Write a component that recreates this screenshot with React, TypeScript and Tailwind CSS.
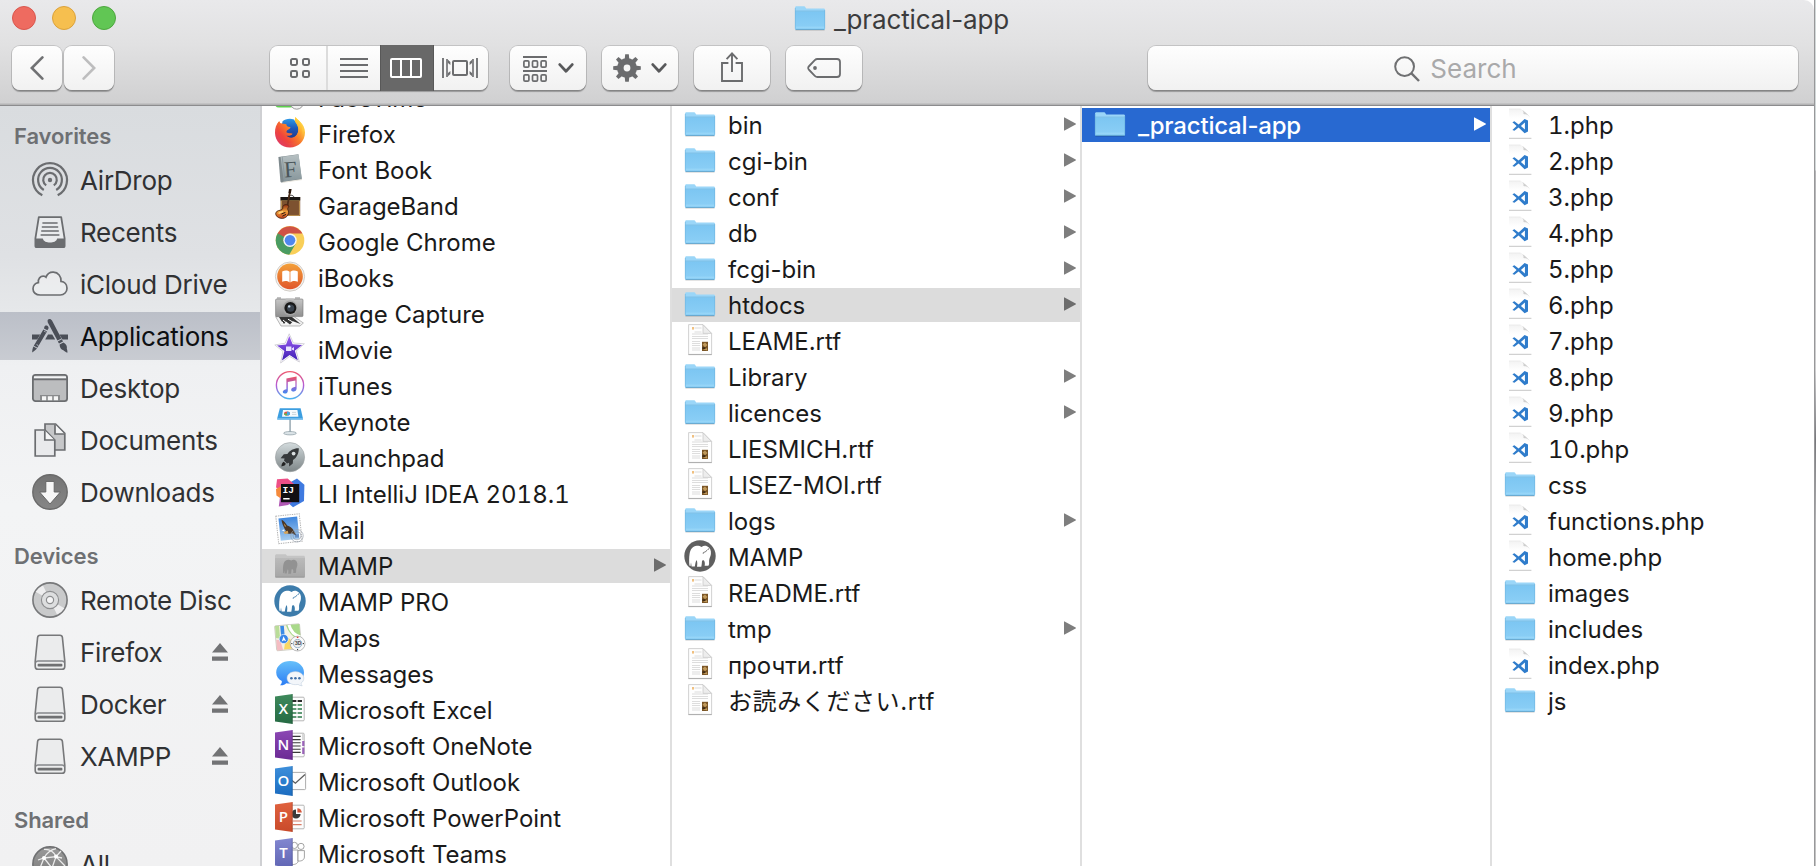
import type { ReactNode } from "react";

/* ---------- file icons, drawn on a 32px grid ---------- */

function Icon({ children }: { children: ReactNode }) {
  return (
    <svg className="h-8 w-8 shrink-0 self-start overflow-visible" viewBox="0 0 32 32" fill="none">
      {children}
    </svg>
  );
}

function FolderShape() {
  return (
    <g>
      <path d="M1.4 27.6H30.6V28.6H1.4z" fill="#000" opacity=".18" />
      <path d="M1 6C1 4.9 1.6 4.3 2.6 4.3H9.6C10.6 4.3 11 4.6 11.5 5.4L12.2 6.6H29.5C30.5 6.6 31 7.2 31 8V26H1z" fill="#9bd6f8" />
      <path d="M1 9.2H31V26.4C31 27.2 30.6 27.8 29.8 27.8H2.2C1.4 27.8 1 27.2 1 26.4z" fill="url(#folderBody)" />
      <path d="M1 9H31" stroke="#79bbe2" strokeWidth=".8" />
      <path d="M1.6 27.5H30.4" stroke="#5d9fc8" strokeWidth=".8" />
      <path d="M1.3 25.2H30.7" stroke="#a5dcf9" strokeWidth=".7" />
      <path d="M1.3 6V26.6M30.7 8V26.6" stroke="#6db3dd" strokeWidth=".6" />
    </g>
  );
}

const Folder = () => (
  <Icon>
    <FolderShape />
  </Icon>
);

const RTF_LINES = [4, 8, 10, 12.5, 14.5, 17.5, 19.5, 21.5, 24, 26];

const Rtf = () => (
  <Icon>
    <path d="M4.6 .6H19L27.6 9.4V30.4H4.6z" fill="#fefefe" stroke="#cdcdcd" strokeWidth=".9" />
    <path d="M4.4 30.6H27.8" stroke="#a6a6a6" strokeWidth=".9" />
    <path d="M19 .8V9.4H27.5z" fill="#ededed" stroke="#c4c4c4" strokeWidth=".7" />
    {RTF_LINES.map((y) => (
      <path key={y} d={y > 16.5 ? `M8 ${y}H16` : y > 9 ? `M8 ${y}H24` : `M10.5 ${y}H17.5`} stroke="#d4d4d4" strokeWidth=".8" />
    ))}
    <rect x="8" y="3" width="2" height="2.6" fill="#f0c080" />
    <rect x="18" y="17.8" width="6" height="9.2" fill="#7a5526" />
    <path d="M18.5 20.5L21 18.5L23.5 21L21 23.2zM19 25.5L22.5 24L23.6 26.5z" fill="#c09a5c" />
    <path d="M18.4 23.2H21.4V25H18.4z" fill="#3f2b14" />
  </Icon>
);

const Php = () => (
  <Icon>
    <path d="M5 1H16.6C19 2 19.6 3.6 19.6 5.6C22.2 5.8 24.4 6.6 26 8.8V30H5z" fill="url(#pageFade)" />
    <path d="M16.6 1C19.4 2.4 23.6 6 26 8.8C24 7 22 6.2 19.4 6C19.8 4 19 2.2 16.6 1z" fill="#cfcfcf" />
    <path d="M5 1H16.6" stroke="#e3e3e3" strokeWidth=".6" />
    <path d="M5 30.3H27.4" stroke="#c6c6c6" strokeWidth="1" />
    <path
      fillRule="evenodd"
      clipRule="evenodd"
      d="M20.6 11L24 12.6V23.6L20.6 25.2L14.6 19.6L10.4 22.8L8.4 21.9L12.6 18L8.4 14.2L10.4 13.3L14.6 16.5zM20.9 14.6L16.9 18L20.9 21.6z"
      fill="#2f7ccb"
    />
  </Icon>
);

const ElephantShape = ({ fill }: { fill: string }) => (
  <path
    d="M5.4 25.6C5 21.5 5 17.3 5.6 13.8C6.2 9.2 8.8 6 12.8 5.7C14.8 5.6 16.2 6.2 17.6 6.9C19.2 5.6 21.3 5.4 23 6.2C26 7.5 27.4 10.6 26.9 14C26.6 16.4 25.4 18.2 25.1 20.5C24.9 22.3 25.6 24 24.4 25.8H20.6C21.2 23.2 20.7 21.6 20 20.4C19.2 20 18.6 20.4 18.1 20.6C17.8 22.5 17.9 24.4 17.3 26.8H13C13.4 24.6 13.4 22.6 12.9 20.6H12.2C11.4 22.4 11.4 24.4 10.8 26.5H7.6C7.4 25 7.2 23.6 7 22.4C6.8 23.4 6.6 24.6 6.6 26z"
    fill={fill}
  />
);

function Mamp({ ring }: { ring: string }) {
  return (
    <Icon>
      <circle cx="16" cy="16" r="15.7" fill={ring} />
      <ElephantShape fill="#fff" />
      <path d="M25.2 8.6C23.4 9.2 22.6 11.6 20.4 12.2C19.2 12.4 18.8 12.8 19.4 13.8" stroke={ring} strokeWidth=".9" />
    </Icon>
  );
}
const MampGray = () => <Mamp ring="#5f5f5f" />;
const MampPro = () => <Mamp ring="#3d7cab" />;

const MampFolder = () => (
  <Icon>
    <path d="M1 7C1 5.8 1.8 5.2 2.8 5.2H11C12 5.2 12.6 5.8 13 6.8H29.4C30.4 6.8 31 7.4 31 8.4V27.6H1z" fill="#c4c4c4" />
    <path d="M1 9H31V27C31 27.8 30.6 28.2 29.8 28.2H2.2C1.4 28.2 1 27.8 1 27z" fill="url(#grayFolder)" />
    <path d="M1.3 28.2H30.7" stroke="#8f8f8f" strokeWidth=".8" />
    <g transform="translate(5.6 7) scale(.66)">
      <ElephantShape fill="#929292" />
    </g>
  </Icon>
);

const FaceTime = () => (
  <Icon>
    <rect x="1" y="8" width="19" height="18.6" rx="4" fill="#5ecf4e" />
    <circle cx="22.8" cy="21.6" r="6.6" fill="#f2f2f2" stroke="#8f8f8f" strokeWidth=".9" />
  </Icon>
);

const Firefox = () => (
  <Icon>
    <path d="M1 16C.8 11 2.4 6.6 5.2 4.2C5.6 5.4 6 6 6.8 6.6C8.6 6 10.4 6 12 6.6L21.6 4.2C21 3 20.8 1.6 21.6 0C22.4 1.8 24.2 3 25.8 4.4C29.2 7.2 31 11 31 15.6C31 24 24.4 30.6 16 30.6C7.6 30.6 1.2 24.4 1 16z" fill="url(#fx)" />
    <path d="M8.4 4.4C11 1.8 16 .8 20 2.4C22 6 24.6 8 24.4 12.6C24.2 18 20.4 21.4 15.6 21.4C11 21.4 8 18.4 7.6 14.6z" fill="url(#fxGlobe)" />
    <path d="M5.2 4.2C5.6 5.4 6.2 6.4 7.4 7C9 6.4 11.4 6.6 12.6 7.4C12.2 9.4 14.4 9.6 16.4 10C16.6 11.4 15 12.4 13.2 13.2C12.6 13.6 12.4 14.6 12.6 15.6C14.4 16.8 16.4 15.8 18.6 16.8C17.4 18.6 14.6 19.2 12.4 18.6C15.4 22.4 22.4 21 24 15.4C24.8 12.4 24.2 9 21.6 5.6C20.6 4.2 20.6 1.8 21.6 0C22.4 1.8 24.2 3 25.8 4.4C27.6 6.4 28.6 11 28 15.6C26.8 23 21 26.6 14.8 26C7.6 25.2 2.6 19.6 3 11C3 8 3.8 5.6 5.2 4.2z" fill="url(#fxTail)" />
  </Icon>
);

const FontBook = () => (
  <Icon>
    <path d="M4.4 4L24.4 1.2L27.8 26.4L8 29.6C7 29.6 6.6 29 6.4 28.2z" fill="#7e898d" />
    <path d="M6.6 4L24.6 1.4L27.8 25.6L9.8 28.6z" fill="url(#book)" />
    <path d="M8.2 3.8L11 28.4" stroke="#86949a" strokeWidth=".8" />
    <path d="M8.6 29.4L27.8 26.6" stroke="#ece9e0" strokeWidth="1" />
    <text x="10" y="24" fontSize="23" fontFamily="Liberation Serif, serif" fill="#4b565a" transform="rotate(-4 16 16)">F</text>
  </Icon>
);

const GarageBand = () => (
  <Icon>
    <rect x="6.6" y="8" width="19.6" height="19" fill="#6e4424" />
    <rect x="7.4" y="11.4" width="18" height="15" fill="#7d5230" stroke="#c49a55" strokeWidth=".9" />
    <rect x="6.6" y="8" width="19.6" height="3.4" fill="#191614" />
    <path d="M14 7.4C16 5.6 19 6 20 8" stroke="#222" strokeWidth=".9" />
    <path d="M13.2 18L16.2 1.4" stroke="#4c2d18" strokeWidth="1.8" />
    <path d="M14.4 4L15 0H17.6L16.8 4.4z" fill="#2c1a10" />
    <path d="M9.6 16.4C11 15 14.6 15.6 14.8 17.2C14.6 18.4 13.4 19 13.8 20.6C16 24 13.4 29 8.6 29.4C4.4 29.6 1.2 26.8 1.8 24C2.4 21.4 6 21.6 8 20.6C9.4 19.6 8.2 17.6 9.6 16.4z" fill="url(#guitar)" stroke="#3d1d0d" strokeWidth=".8" />
    <path d="M4.6 24.6C5.6 23.2 7.6 23 9 22.6" stroke="#ffd67a" strokeWidth="1.4" />
    <path d="M7.4 25L11.4 23.4M8.4 27.2L12 25.4" stroke="#2b1a10" strokeWidth="1" />
  </Icon>
);

const Chrome = () => (
  <Icon>
    <circle cx="16" cy="15.4" r="14.3" fill="#f9cf58" />
    <path d="M3.7 8.2A14.3 14.3 0 0 0 15.2 29.7L21.6 18.9L16 15.4z" fill="#4a9c62" />
    <path d="M3.7 8.2A14.3 14.3 0 0 1 28.4 8.4H16C12.6 8.4 10.4 10.4 9.6 12.8L9.2 17.4z" fill="#cf5246" />
    <path d="M3.7 8.2L9.8 18.6L10.2 12z" fill="#4a9c62" />
    <circle cx="16" cy="15.2" r="6.7" fill="#f5f5f5" />
    <circle cx="16" cy="15.2" r="5.3" fill="#4f87ed" />
  </Icon>
);

const IBooks = () => (
  <Icon>
    <circle cx="16" cy="15.6" r="14.6" fill="#f3f1ee" stroke="#c9c4be" strokeWidth=".8" />
    <circle cx="16" cy="15.4" r="12.8" fill="url(#orange)" />
    <path d="M8.2 10.4C10.8 9.2 13.8 9.2 15.6 10.8V21.4C13.4 19.8 10.6 19.8 8.2 20.8zM23.8 10.4C21.2 9.2 18.2 9.2 16.4 10.8V21.4C18.6 19.8 21.4 19.8 23.8 20.8z" fill="#fff" />
  </Icon>
);

const ImageCapture = () => (
  <Icon>
    <path d="M1.6 19.6L7 29L26 29L29.4 26L20 19.6z" fill="#f2f2f2" stroke="#8a8a8a" strokeWidth=".6" />
    <path d="M5 20L9.6 27.6L12 24.6L16 27.4L19 24.2L26.6 27L18 20z" fill="#333" />
    <path d="M9 23L13 26.4M14 22.2L21 26.4M10 28L8 24.6" stroke="#fff" strokeWidth="1" />
    <rect x="1.6" y="2" width="27.4" height="17.6" rx="1" fill="url(#camera)" stroke="#777" strokeWidth=".6" />
    <path d="M3 1H7M21 1H26" stroke="#888" strokeWidth="1.2" />
    <path d="M10.6 4.4L12 1.4H19.4L21 4.4z" fill="#bdbdbd" />
    <circle cx="16" cy="11" r="7.4" fill="#a5a5a5" />
    <circle cx="16.4" cy="11" r="6" fill="#191919" />
    <circle cx="16.6" cy="11.2" r="3.6" fill="#39424d" />
    <circle cx="15.2" cy="9.4" r="1.2" fill="#cfe0ef" />
  </Icon>
);

const IMovie = () => (
  <Icon>
    <path d="M15.2 .8L19.4 10L30.4 10.8L22.2 18L25.4 29L15.6 23.4L6.6 30L9 18.4L.8 12L11.2 10.2z" fill="#fff" stroke="#d0ced6" strokeWidth=".9" strokeLinejoin="round" />
    <path d="M15.3 3L18.6 11.2L28.2 12L20.8 17.8L23.8 27.2L15.6 22L8 27.6L10.4 18L3 12.6L12 11.4z" fill="url(#purple)" />
    <path d="M12 13.6H17.4V18H12zM17.8 15.4L20 14V17.6L17.8 16.6z" fill="#e9e2ff" />
  </Icon>
);

const ITunes = () => (
  <Icon>
    <circle cx="16" cy="16.2" r="13.6" fill="#fff" stroke="url(#tunesRing)" strokeWidth="1.4" />
    <path d="M12.4 9.6L22.6 7.4V19.4C22.6 21.2 21.2 22.4 19.6 22.6C18 22.8 17 21.8 17.2 20.6C17.4 19 19 18.2 21.4 17.8V11.4L13.8 13V22C13.8 23.6 12.4 24.6 10.8 24.6C9.4 24.6 8.6 23.6 8.8 22.6C9.2 21 10.8 20.4 12.4 20.2z" fill="url(#tunesNote)" />
  </Icon>
);

const Keynote = () => (
  <Icon>
    <path d="M15.2 14H17V27H15.2z" fill="#a9b7bf" />
    <ellipse cx="16" cy="28.2" rx="6.4" ry="1.7" fill="#dbe3e7" stroke="#8d9ca4" strokeWidth=".7" />
    <path d="M5.8 3.2H26.6L29 13.4H3.2z" fill="#3c9ee0" />
    <path d="M3.2 13.2H29V14.8H3.2z" fill="#62b5ea" />
    <path d="M9 5H23.4L24.4 11.8H8z" fill="#f4fafd" />
    <ellipse cx="13" cy="8.6" rx="3" ry="2" fill="#e7524d" />
    <path d="M13 6.6A3 2 0 0 1 13 10.6z" fill="#44a7e8" />
    <path d="M10 8.6A3 2 0 0 0 13 10.6V8.6z" fill="#5bb94d" />
    <path d="M18 7.4H22M18 9.4H22.4" stroke="#cbd6dc" strokeWidth="1" />
  </Icon>
);

const Launchpad = () => (
  <Icon>
    <circle cx="16" cy="16.2" r="14.6" fill="url(#launch)" stroke="#9a9fa1" strokeWidth=".6" />
    <path d="M24.8 7.2C20 7 15.8 9.2 13.4 13L9.8 13.2L6.6 17.2L10.6 17.4L10 19.4L13 22.4L15 21.8L15.2 25.6L18.8 22.6L19 19C22.8 16.6 25 12.2 24.8 7.2z" fill="#36393b" />
    <circle cx="19.6" cy="12.6" r="1.9" fill="#d9dee0" />
    <path d="M9.8 20.8C8.2 21.4 7.6 23.4 7.4 25.4C9.4 25.2 11.2 24.6 11.8 22.8z" fill="#222" />
  </Icon>
);

const IntelliJ = () => (
  <Icon>
    <path d="M15 6L23 1.4L30.4 7.8L30 24L19 30.2L12 24z" fill="#3f7ae0" />
    <path d="M3 2.2L13.6 1.4L20 7L10 14L2 10.6z" fill="#ee4f86" />
    <path d="M2 12L9 8V23L2.4 18.4z" fill="#f58a3c" />
    <path d="M6 20L10 23L18 25L14 28L4.8 29.4z" fill="#b158b4" />
    <rect x="7" y="7" width="18.2" height="18.2" fill="#120f12" />
    <text x="8.6" y="16.4" fontSize="9.6" fontWeight="700" fontFamily="Liberation Mono, monospace" fill="#fff">IJ</text>
    <rect x="9.2" y="21" width="6.4" height="1.5" fill="#fff" />
  </Icon>
);

const Mail = () => (
  <Icon>
    <g transform="rotate(-6 16 16)">
      <rect x="3.2" y="1.8" width="23.6" height="27.6" fill="#fff" stroke="#b4b4b4" strokeWidth="1" strokeDasharray="1.4 .9" />
      <rect x="5.6" y="4.4" width="18.8" height="22.4" fill="url(#sky)" />
      <path d="M8.6 5.8C10.4 6.4 12 9 13.6 12.2C16 13.4 18.4 15 19.6 18L21.6 23L17.6 20.4C15.6 21.4 12.4 20.4 10.4 18.2L12 17.6C10.6 15.4 8.4 9.4 8.6 5.8z" fill="#4a3727" />
      <path d="M9 18.4L13.6 17.6L14 20.2L10.4 20.4zM10.4 9.6L12.6 13.2L11.2 13z" fill="#d6a55a" />
      <path d="M7.6 16.4L10 15.8L10.4 17.8z" fill="#fff" />
    </g>
    <circle cx="23" cy="22.8" r="6.2" stroke="#9aa2ae" strokeWidth=".7" />
    <circle cx="23" cy="22.8" r="4" stroke="#8791a0" strokeWidth=".6" />
    <path d="M21 21.2H25V24.6H21z" fill="#4a6fae" opacity=".6" />
  </Icon>
);

const Maps = () => (
  <Icon>
    <g transform="rotate(-5 14 16)">
      <rect x="1.6" y="3.8" width="25" height="25" rx="1" fill="#f4f1e4" stroke="#bdbdb2" strokeWidth=".7" />
      <path d="M13 4H26.4V20C20 18 15 12 13 4z" fill="#a9d98a" />
      <path d="M16 4C17 10 21 15 26.4 17" stroke="#fff" strokeWidth="3" />
      <path d="M2 4H6V17L2 16z" fill="#b9dd98" />
      <path d="M12 15L21 23L18 28H9z" fill="#f8d765" />
      <path d="M2 18H6L8 28.6H2z" fill="#f4bcc2" />
      <path d="M9 4.4V18" stroke="#3a8ae6" strokeWidth="3.6" />
      <circle cx="9.6" cy="17.6" r="4.6" fill="#3a86e8" stroke="#fff" strokeWidth=".6" />
      <path d="M9.6 14.8L11.8 20L9.6 19L7.4 20z" fill="#fff" />
    </g>
    <circle cx="23.6" cy="22.6" r="7.4" fill="#fafafa" stroke="#a9a9a9" strokeWidth=".8" />
    <circle cx="23.6" cy="22.6" r="4.2" fill="#eee" stroke="#8cabc4" strokeWidth=".9" />
    <text x="20.7" y="24.4" fontSize="4.8" fontWeight="700" fontFamily="Inter, sans-serif" fill="#444">3D</text>
    <path d="M22.8 15.6H24.4V17H22.8z" fill="#df3b30" />
    <path d="M17.2 22.6H18.4M28.8 22.6H30M23.6 28V29.2" stroke="#333" strokeWidth="1" />
  </Icon>
);

const Messages = () => (
  <Icon>
    <path d="M16.2 4C24 4 30 8.8 30 15.4C30 22 24 26.6 16 26.6C14.6 26.6 13.4 26.4 12.2 26.2C10.4 28 8.4 28.6 6 28.2C7.4 27 8 25.6 7.8 24C4.4 22.2 2.2 19.2 2.2 15.4C2.2 8.8 8.4 4 16.2 4z" fill="url(#msg)" />
    <path d="M21.4 14.6C26.2 14.6 29.8 17.6 29.8 21.2C29.8 23.2 28.8 25 27 26.2C27 27.2 27.4 28 28.2 28.8C26.4 28.8 25 28.2 24 27.4C18 28.6 13 25.6 13 21.2C13 17.4 16.6 14.6 21.4 14.6z" fill="#f3f6fa" stroke="#b7c6d8" strokeWidth=".5" />
    <circle cx="17.4" cy="21.2" r="1.3" fill="#3f6fa8" />
    <circle cx="21.4" cy="21.2" r="1.3" fill="#3f6fa8" />
    <circle cx="25.4" cy="21.2" r="1.3" fill="#3f6fa8" />
  </Icon>
);

function Office({ letter, fill, children }: { letter: string; fill: string; children: ReactNode }) {
  return (
    <Icon>
      {children}
      <path d="M1 3.6L18.7 1V31L1 28.6z" fill={fill} />
      <path d="M18.2 1.2V30.8" stroke="#000" strokeOpacity=".2" strokeWidth=".8" />
      <text x="9.4" y="21" fontSize="15" fontWeight="600" textAnchor="middle" fontFamily="Open Sans, sans-serif" fill="#fff">
        {letter}
      </text>
    </Icon>
  );
}

const Page = () => <rect x="15" y="4.2" width="15.2" height="23.6" rx="1" fill="#fdfdfd" stroke="#a3a3a3" strokeWidth=".8" />;

const Excel = () => (
  <Office letter="X" fill="url(#xl)">
    <Page />
    <path d="M18 8H22.4M23.6 8H28" stroke="#2c2c2c" strokeWidth="2" />
    <path d="M18 12H22.4M23.6 12H28M18 16H22.4M23.6 16H28M18 20H22.4M23.6 20H28M18 24H22.4M23.6 24H28" stroke="#5f9a75" strokeWidth="2.1" />
  </Office>
);
const OneNote = () => (
  <Office letter="N" fill="url(#on)">
    <Page />
    <path d="M28 5H30.4V11H28z" fill="#d9d9d9" />
    <path d="M28.2 12H30.4V17H28.2zM28.2 18.5H30.4V25H28.2z" fill="#9a62b8" />
    <path d="M18 7.4H26.6M18 10.6H26.6M18 13.8H26.6M18 17H26.6M18 20.2H26.6M18 23.4H26.6" stroke="#3a3a3a" strokeWidth="1.1" />
  </Office>
);
const Outlook = () => (
  <Office letter="O" fill="url(#ol)">
    <rect x="15" y="7.4" width="16.6" height="17.2" rx="1" fill="#fdfdfd" stroke="#a3a3a3" strokeWidth=".9" />
    <path d="M18 15.4L21.4 18.2L31 9.6" stroke="#5c5c5c" strokeWidth="1.3" />
  </Office>
);
const PowerPoint = () => (
  <Office letter="P" fill="url(#pp)">
    <Page />
    <path d="M22 8.4A4.6 4.6 0 1 0 26.6 13H22z" fill="#3b3b3b" />
    <path d="M23.4 7.2A4.4 4.4 0 0 1 27.8 11.6H23.4z" fill="#d4573b" />
    <path d="M19 20H27.6M19 23.6H27.6" stroke="#d87b65" strokeWidth="1.2" />
  </Office>
);
const Teams = () => (
  <Office letter="T" fill="url(#tm)">
    <circle cx="20.4" cy="8.4" r="3.1" fill="#fff" stroke="#8d8d8d" strokeWidth=".8" />
    <circle cx="27" cy="9.4" r="3.1" fill="#fff" stroke="#8d8d8d" strokeWidth=".8" />
    <path d="M16 13H24V24C24 26 22 27.6 18 27.6z" fill="#fff" stroke="#8d8d8d" strokeWidth=".8" />
    <path d="M24 13.6H30.4V20C30.4 22.6 28 24.4 24 24z" fill="#fff" stroke="#8d8d8d" strokeWidth=".8" />
  </Office>
);

/* Gradients shared by every icon on the page. */
function Gradients() {
  const v = { x1: 0, y1: 0, x2: 0, y2: 1 };
  const grad = (id: string, stops: string[], dir: { x1: number; y1: number; x2: number; y2: number } = v) => (
    <linearGradient id={id} key={id} {...dir}>
      {stops.map((c, i) => (
        <stop key={i} offset={i / (stops.length - 1)} stopColor={c} />
      ))}
    </linearGradient>
  );
  const diag = { x1: 1, y1: 0, x2: 0, y2: 1 };
  return (
    <svg className="absolute h-0 w-0">
      <defs>
        {grad("folderBody", ["#7cc6f2", "#8ccff6"])}
        {grad("pageFade", ["#f3f3f3", "#ffffff", "#ffffff", "#ffffff"])}
        {grad("grayFolder", ["#bababa", "#a6a6a6"])}
        {grad("fx", ["#ffe65a", "#ffc63e", "#f7762c", "#e8404a", "#d83a7c"], diag)}
        {grad("fxGlobe", ["#2f9ae6", "#1f57b8", "#203a8c"])}
        {grad("fxTail", ["#fff04a", "#ffb932", "#fa7a2a", "#f0443c", "#e6325c"], diag)}
        {grad("book", ["#b6c0c2", "#87969b"])}
        {grad("guitar", ["#8a2d12", "#f0a03a", "#c2401c"])}
        {grad("orange", ["#f3a03a", "#e0562a"])}
        {grad("camera", ["#c6c6c6", "#8f8f8f"])}
        {grad("purple", ["#9a5bf0", "#3d1fb4"])}
        {grad("tunesRing", ["#ee5a6f", "#b65bd6", "#4ab4ef"])}
        {grad("tunesNote", ["#f0525f", "#a25bd0", "#3f8cf0"])}
        {grad("launch", ["#d3dbdd", "#7d8587"])}
        {grad("sky", ["#3f86dd", "#a6cdf0"])}
        {grad("msg", ["#66c0fa", "#2c7df4"])}
        {grad("xl", ["#3f8a5c", "#256a43"])}
        {grad("on", ["#8c48b4", "#6b2a94"])}
        {grad("ol", ["#3d8fdb", "#1b6cc0"])}
        {grad("pp", ["#e0623f", "#c94a2a"])}
        {grad("tm", ["#8287d0", "#6065b4"])}
        {grad("downFill", ["#747474", "#868686"])}
        {grad("netFill", ["#9a9a9a", "#787878"])}
      </defs>
    </svg>
  );
}

/* ---------- sidebar icons, drawn on a 36px grid ---------- */

const SIDE_STROKE = "#6b6d70";

function SideSvg({ children }: { children: ReactNode }) {
  return (
    <svg className="h-9 w-9 shrink-0 overflow-visible" viewBox="0 0 36 36" fill="none">
      {children}
    </svg>
  );
}

const AirDrop = () => (
  <SideSvg>
    <g stroke={SIDE_STROKE} strokeWidth="2.2">
      <path d="M10.3 33.3A17 17 0 1 1 25.7 33.3" />
      <path d="M11.8 28A11.9 11.9 0 1 1 24.2 28" />
      <path d="M14.2 23.4A6.8 6.8 0 1 1 21.8 23.4" />
    </g>
    <circle cx="18" cy="18" r="2.2" fill={SIDE_STROKE} />
  </SideSvg>
);
const Recents = () => (
  <SideSvg>
    <path d="M6.8 3.2H29.2L32.6 24.4V32.2C32.6 32.8 32.2 33 31.8 33H4.2C3.8 33 3.4 32.8 3.4 32.2V24.4z" fill="#fff" fillOpacity=".35" stroke={SIDE_STROKE} strokeWidth="1.8" strokeLinejoin="round" />
    <path d="M3 24.4H10.8C11.6 27.4 14.6 28.4 18 28.4C21.4 28.4 24.4 27.4 25.2 24.4H33V32.4C33 33 32.6 33.4 32 33.4H4C3.4 33.4 3 33 3 32.4z" fill={SIDE_STROKE} />
    <path d="M10.4 9H25.6M9.8 13H26.2M9.2 17H26.8M8.6 21H27.4" stroke={SIDE_STROKE} strokeWidth="1.6" />
  </SideSvg>
);
const Cloud = () => (
  <SideSvg>
    <path d="M8.2 29C3.8 29 1 26.4 1 22.8C1 19.4 3.4 17 6.4 16.6C5.8 12.8 8.4 10 11.6 10.2C12.6 10.2 13.4 10.6 14 11.2C15.4 7.8 18.2 6 21.4 6.2C26.2 6.4 29.4 10.2 29 15.4C32.6 15.8 35 18.6 35 22.2C35 26 32.2 29 28.2 29z" fill="#fff" fillOpacity=".3" stroke={SIDE_STROKE} strokeWidth="1.7" />
  </SideSvg>
);
const Applications = () => (
  <SideSvg>
    <g fill="#4a4e57">
      <path d="M0 16.4H8.2L5.2 21.6H0zM13.2 21.6L16 16.4H20.2L23.2 21.6zM27.4 16.4H36V21.6H30.4z" />
      <path d="M15.6 3.2C15.4 1.8 16.4 1 17.6 1C18.6 1 19.4 1.6 20 2.6L29.4 20.4L25.4 22.6L15.8 4.6z" />
      <path d="M25.8 23.4L29.8 21.2L31 23.4L27 25.6zM27.6 26.4L31.4 24.4C34.2 25.8 35.4 28.6 34.8 30.6C35.2 32 35.6 33 35.4 34.8C33.6 34 32.4 33 31.4 32.2C29 31.4 27.6 29.2 27.6 26.4z" />
      <path d="M12.4 8.8C13.2 7 15.4 7.4 16.4 9C17 10.2 16 11.4 15.4 12.2L12 10.4zM11.4 11.4L15 13.4L5.4 29.8L1.8 27.8zM1.4 28.6L5 30.6C3.8 32 2 33.4 .2 34.6C.2 32.4 .6 30.2 1.4 28.6z" />
    </g>
    <path d="M12.2 13.2L13.6 14M4.6 26.6L6.4 27.6" stroke="#c0c5ce" strokeWidth=".9" />
  </SideSvg>
);
const Desktop = () => (
  <SideSvg>
    <rect x=".9" y="4.9" width="34.2" height="26.2" rx="2.6" fill="#bcbdbf" stroke={SIDE_STROKE} strokeWidth="1.8" />
    <path d="M2 6.4H34V8.2H2z" fill="#f4f5f6" />
    <path d="M1 9.4H35" stroke={SIDE_STROKE} strokeWidth="1.6" />
    <path d="M8 30.4V25H28V30.4z" fill="#8a8b8d" />
    <path d="M10 26.2H14.2V30.2H10zM15.8 26.2H20.2V30.2H15.8zM21.8 26.2H26V30.2H21.8z" fill="#f6f6f6" />
  </SideSvg>
);
const Documents = () => (
  <SideSvg>
    <path d="M13 2H23.6L32.8 11.4V28H13z" fill="#c6c7c9" stroke={SIDE_STROKE} strokeWidth="1.7" />
    <path d="M23 2.4V12H32.4" fill="#f4f5f6" stroke={SIDE_STROKE} strokeWidth="1.7" />
    <path d="M3.2 8H13L22.8 18V34H3.2z" fill="#e9eaec" stroke={SIDE_STROKE} strokeWidth="1.7" />
    <path d="M12.8 8.4V18H22.4" fill="#f6f6f7" stroke={SIDE_STROKE} strokeWidth="1.7" />
  </SideSvg>
);
const Downloads = () => (
  <SideSvg>
    <circle cx="18" cy="18" r="17.2" fill="url(#downFill)" stroke="#6a6a6a" strokeWidth="1.4" />
    <path d="M13.8 7.4H22.2V18H28.4L18 30L7.6 18H13.8z" fill="#f7f7f7" stroke="#666" strokeWidth="1" />
  </SideSvg>
);
const Disc = () => (
  <SideSvg>
    <circle cx="18" cy="18" r="17.1" fill="#c9cacb" stroke="#77787a" strokeWidth="1.6" />
    <path d="M18 18L3.6 9.8A16.4 16.4 0 0 1 11 3.4zM18 18L32.4 26.2A16.4 16.4 0 0 1 25 32.6z" fill="#eeeeef" />
    <circle cx="18" cy="18" r="8.6" fill="#dddedf" stroke="#8d8e90" strokeWidth="1.1" />
    <circle cx="18" cy="18" r="3.6" fill="#f5f5f6" stroke="#8d8e90" strokeWidth="1.2" />
  </SideSvg>
);
const Drive = () => (
  <SideSvg>
    <path d="M8 1.2H28C29.6 1.2 30.2 2 30.4 3.4L32.8 27.4V32.4C32.8 34.2 31.8 35.2 30 35.2H6C4.2 35.2 3.2 34.2 3.2 32.4V27.4L5.6 3.4C5.8 2 6.4 1.2 8 1.2z" fill="#ebeced" stroke="#77787a" strokeWidth="1.6" />
    <path d="M3.8 28.6C4 27.4 5 27 6 27H30C31 27 32 27.4 32.2 28.6" stroke="#85868a" strokeWidth="1.3" />
    <rect x="5.6" y="29.8" width="24.8" height="2.6" rx="1" fill="#6f7072" />
  </SideSvg>
);
const Network = () => (
  <SideSvg>
    <circle cx="18" cy="18" r="17.1" fill="url(#netFill)" stroke="#707173" strokeWidth="1.6" />
    <path d="M6 14L12 12L24 10.6L30 12M12 12C14 8 18 4 24 2.6M24 10.6C22 6 18 3 12 3.4M12 12L8 22L4 26M24 10.6L20 22L14 34M24 10.6L33 20M12 12L20 22L31 26M24 10.6L29 5" stroke="#ececec" strokeWidth="1.3" />
    <circle cx="12" cy="12" r="2" fill="#fff" />
    <circle cx="24" cy="10.6" r="2" fill="#fff" />
  </SideSvg>
);
const Eject = () => (
  <svg className="ml-auto mr-8 h-[18px] w-4" viewBox="0 0 16 18">
    <path d="M8 0L16 9.6H0zM0 13.6H16V17.8H0z" fill="#727375" />
  </svg>
);

/* ---------- data ---------- */

type Kind = () => ReactNode;
type Entry = { name: string; icon: Kind; arrow?: boolean; selected?: "gray" | "blue"; spaced?: boolean };
type Place = { name: string; icon: Kind; eject?: boolean; selected?: boolean };

const PLACES: { title: string; items: Place[] }[] = [
  {
    title: "Favorites",
    items: [
      { name: "AirDrop", icon: AirDrop },
      { name: "Recents", icon: Recents },
      { name: "iCloud Drive", icon: Cloud },
      { name: "Applications", icon: Applications, selected: true },
      { name: "Desktop", icon: Desktop },
      { name: "Documents", icon: Documents },
      { name: "Downloads", icon: Downloads },
    ],
  },
  {
    title: "Devices",
    items: [
      { name: "Remote Disc", icon: Disc },
      { name: "Firefox", icon: Drive, eject: true },
      { name: "Docker", icon: Drive, eject: true },
      { name: "XAMPP", icon: Drive, eject: true },
    ],
  },
  { title: "Shared", items: [{ name: "All...", icon: Network }] },
];

const APPS: Entry[] = [
  { name: "FaceTime", icon: FaceTime },
  { name: "Firefox", icon: Firefox },
  { name: "Font Book", icon: FontBook },
  { name: "GarageBand", icon: GarageBand },
  { name: "Google Chrome", icon: Chrome },
  { name: "iBooks", icon: IBooks },
  { name: "Image Capture", icon: ImageCapture },
  { name: "iMovie", icon: IMovie },
  { name: "iTunes", icon: ITunes },
  { name: "Keynote", icon: Keynote },
  { name: "Launchpad", icon: Launchpad },
  { name: "LI IntelliJ IDEA 2018.1", icon: IntelliJ },
  { name: "Mail", icon: Mail },
  { name: "MAMP", icon: MampFolder, arrow: true, selected: "gray" },
  { name: "MAMP PRO", icon: MampPro },
  { name: "Maps", icon: Maps },
  { name: "Messages", icon: Messages },
  { name: "Microsoft Excel", icon: Excel },
  { name: "Microsoft OneNote", icon: OneNote },
  { name: "Microsoft Outlook", icon: Outlook },
  { name: "Microsoft PowerPoint", icon: PowerPoint },
  { name: "Microsoft Teams", icon: Teams },
];

const dir = (name: string): Entry => ({ name, icon: Folder, arrow: true });
const rtf = (name: string, spaced = false): Entry => ({ name, icon: Rtf, spaced });
const php = (name: string): Entry => ({ name, icon: Php });

const MAMP_FILES: Entry[] = [
  dir("bin"),
  dir("cgi-bin"),
  dir("conf"),
  dir("db"),
  dir("fcgi-bin"),
  { ...dir("htdocs"), selected: "gray" },
  rtf("LEAME.rtf"),
  dir("Library"),
  dir("licences"),
  rtf("LIESMICH.rtf"),
  rtf("LISEZ-MOI.rtf"),
  dir("logs"),
  { name: "MAMP", icon: MampGray },
  rtf("README.rtf"),
  dir("tmp"),
  rtf("прочти.rtf"),
  rtf("お読みください.rtf", true),
];

const HTDOCS: Entry[] = [{ ...dir("_practical-app"), selected: "blue" }];

const PROJECT: Entry[] = [
  ...["1.php", "2.php", "3.php", "4.php", "5.php", "6.php", "7.php", "8.php", "9.php", "10.php"].map(php),
  { name: "css", icon: Folder },
  php("functions.php"),
  php("home.php"),
  { name: "images", icon: Folder },
  { name: "includes", icon: Folder },
  php("index.php"),
  { name: "js", icon: Folder },
];

/* ---------- layout ---------- */

function Row({ entry }: { entry: Entry }) {
  const blue = entry.selected === "blue";
  const IconView = entry.icon;
  const numeric = /\d/.test(entry.name);
  return (
    <li
      className={`flex h-[34px] shrink-0 items-center gap-3 pl-3 pr-1 ${
        blue ? "bg-[#2869d1] text-white" : entry.selected ? "bg-[#dcdcdc] text-[#1a1a1a]" : "text-[#1a1a1a]"
      }`}
    >
      <IconView />
      <span
        className={`whitespace-nowrap pt-[2px] ${numeric ? "tabular-nums" : ""} ${entry.spaced ? "tracking-[0.6px]" : ""} ${
          blue ? "font-medium tracking-[-0.2px]" : ""
        }`}
      >
        {entry.name}
      </span>
      {entry.arrow && (
        <svg className="-mt-px mb-px ml-auto h-[14px] w-3" viewBox="0 0 12 14">
          <path d="M.6 .4L11.6 6.4Q12.4 7 11.6 7.6L.6 13.6Q0 13.8 0 13V1Q0 .2 .6 .4z" fill={blue ? "#fff" : entry.selected ? "#6c6c6c" : "#7e7e7e"} />
        </svg>
      )}
    </li>
  );
}

function Column({ entries, scrolled, last }: { entries: Entry[]; scrolled?: boolean; last?: boolean }) {
  return (
    <ul
      className={`flex flex-col gap-[2px] overflow-hidden text-[24px] leading-[34px] ${
        last ? "min-w-0 flex-1" : "w-[410px] shrink-0 border-r-2 border-[#dfdfdf]"
      }`}
    >
      <li className={`shrink-0 ${scrolled ? "-mt-[27px]" : "h-0"}`} />
      {entries.map((e) => (
        <Row key={e.name} entry={e} />
      ))}
    </ul>
  );
}

function Sidebar() {
  return (
    <nav className="flex w-[262px] shrink-0 flex-col gap-5 overflow-hidden border-r-2 border-[#cfd0d3] bg-[linear-gradient(180deg,#d9dcdf_0px,#dfe1e4_150px,#e6e8ea_206px,#eff0f2_260px,#f3f4f5_400px,#f1f1f2_760px)] pt-[10px]">
      {PLACES.map((group) => (
        <section key={group.title} className="shrink-0">
          <h2 className="flex h-10 items-center pl-[14px] text-[22px] font-semibold tracking-[-0.1px] text-[#6e7073]">{group.title}</h2>
          <ul className="flex flex-col gap-1">
            {group.items.map((p) => {
              const IconView = p.icon;
              return (
                <li
                  key={p.name}
                  className={`flex h-12 items-center pl-8 text-[26px] ${
                    p.selected ? "bg-[linear-gradient(180deg,#bbbfc8,#c9ccd2)] text-[#0d0f12]" : "text-[#303133]"
                  }`}
                >
                  <IconView />
                  <span className="ml-3 whitespace-nowrap tracking-[-0.25px]">{p.name}</span>
                  {p.eject && <Eject />}
                </li>
              );
            })}
          </ul>
        </section>
      ))}
    </nav>
  );
}

const BUTTON =
  "flex h-11 items-center justify-center rounded-lg bg-[linear-gradient(180deg,#fefefe,#f1f1f1)] shadow-[0_0_0_1px_rgba(0,0,0,0.13),0_1.5px_1px_rgba(0,0,0,0.28)]";

const Chevron = () => (
  <svg className="h-[10px] w-4" viewBox="0 0 16 10" fill="none">
    <path d="M1.8 1.6L8 8.2L14.2 1.6" stroke="#58595b" strokeWidth="2.8" strokeLinecap="round" strokeLinejoin="round" />
  </svg>
);

const GEAR_TEETH = [0, 45, 90, 135, 180, 225, 270, 315];

function Toolbar() {
  return (
    <div className="flex h-11 items-stretch pl-3">
      <div className="flex gap-[2px]">
        <button className={`${BUTTON} w-[50px]`}>
          <svg className="h-6 w-[14px]" viewBox="0 0 14 24" fill="none">
            <path d="M12.4 1.4L1.8 12L12.4 22.6" stroke="#707173" strokeWidth="2.6" strokeLinecap="round" />
          </svg>
        </button>
        <button className={`${BUTTON} w-[50px]`}>
          <svg className="h-6 w-[14px]" viewBox="0 0 14 24" fill="none">
            <path d="M1.6 1.4L12.2 12L1.6 22.6" stroke="#bdbdbe" strokeWidth="2.6" strokeLinecap="round" />
          </svg>
        </button>
      </div>

      <div className={`${BUTTON} ml-[156px] w-[218px]`}>
        <div className="flex h-full w-[58px] items-center justify-center border-r-2 border-[#dcdcdc] pl-1">
          <svg className="h-5 w-5" viewBox="0 0 20 20" fill="none" stroke="#6b6c6e" strokeWidth="2">
            <rect x="1" y="1" width="6" height="6" rx="1.4" />
            <rect x="13" y="1" width="6" height="6" rx="1.4" />
            <rect x="1" y="13" width="6" height="6" rx="1.4" />
            <rect x="13" y="13" width="6" height="6" rx="1.4" />
          </svg>
        </div>
        <div className="flex h-full w-[52px] items-center justify-center">
          <svg className="h-5 w-7" viewBox="0 0 28 20">
            <path d="M0 1H28M0 7H28M0 13H28M0 19H28" stroke="#6b6c6e" strokeWidth="2" />
          </svg>
        </div>
        <div className="-my-px flex h-[46px] w-[54px] items-center justify-center border-x border-[#585858] bg-[#686868] pr-[2px]">
          <svg className="h-5 w-8" viewBox="0 0 32 20" fill="none">
            <rect x="1" y="1" width="30" height="18" rx="1" stroke="#fff" strokeWidth="2" />
            <path d="M11 1V19M21 1V19" stroke="#fff" strokeWidth="2" />
          </svg>
        </div>
        <div className="flex h-full w-[54px] items-center justify-center pr-[2px]">
          <svg className="h-5 w-9" viewBox="0 0 36 20" fill="none" stroke="#6b6c6e">
            <rect x="11" y="3" width="14" height="14" rx="1" strokeWidth="2" />
            <path d="M1 0V20M35 0V20" strokeWidth="1.8" />
            <path d="M5 1V19M31 1V19" strokeWidth="1.6" />
            <path d="M5.6 1.6L8.4 4V7L6 5zM5.6 18.4L8.4 16V13L6 15zM30.4 1.6L27.6 4V7L30 5zM30.4 18.4L27.6 16V13L30 15z" fill="#6b6c6e" stroke="none" />
          </svg>
        </div>
      </div>

      <div className="ml-[22px] flex gap-4">
        <button className={`${BUTTON} w-[76px] gap-[11px]`}>
          <svg className="mt-[2px] h-[26px] w-6" viewBox="0 0 24 26" fill="none" stroke="#6b6c6e">
            <path d="M0 1H24M0 15H24" strokeWidth="1.8" />
            <g strokeWidth="1.7">
              <rect x=".9" y="4.9" width="5" height="6.2" rx="1.2" />
              <rect x="9.5" y="4.9" width="5" height="6.2" rx="1.2" />
              <rect x="18.1" y="4.9" width="5" height="6.2" rx="1.2" />
              <rect x=".9" y="18.9" width="5" height="6.2" rx="1.2" />
              <rect x="9.5" y="18.9" width="5" height="6.2" rx="1.2" />
              <rect x="18.1" y="18.9" width="5" height="6.2" rx="1.2" />
            </g>
          </svg>
          <Chevron />
        </button>
        <button className={`${BUTTON} w-[76px] gap-[10px]`}>
          <svg className="h-7 w-7" viewBox="0 0 28 28">
            <g fill="#6b6c6e">
              {GEAR_TEETH.map((a) => (
                <path key={a} d="M11.6 6L12.2 .2H15.8L16.4 6z" transform={`rotate(${a} 14 14)`} />
              ))}
              <circle cx="14" cy="14" r="10" />
            </g>
            <circle cx="14" cy="14" r="3.4" fill="#f7f7f7" />
          </svg>
          <Chevron />
        </button>
        <button className={`${BUTTON} w-[76px]`}>
          <svg className="-mt-[3px] h-[30px] w-[22px]" viewBox="0 0 22 30" fill="none" stroke="#6b6c6e" strokeWidth="1.9">
            <path d="M7.4 11H1V29H21V11H14.6" />
            <path d="M11 20V1.6M5.6 7.2L11 1.4L16.4 7.2" />
          </svg>
        </button>
        <button className={`${BUTTON} w-[76px]`}>
          <svg className="h-5 w-[34px]" viewBox="0 0 34 20" fill="none">
            <path d="M10.4 1H30C31.8 1 33 2.2 33 4V16C33 17.8 31.8 19 30 19H10.4C9.4 19 8.6 18.6 7.8 17.8L2.2 12C.8 10.6 .8 9.4 2.2 8L7.8 2.2C8.6 1.4 9.4 1 10.4 1z" stroke="#6b6c6e" strokeWidth="1.8" />
            <circle cx="8" cy="10" r="1.9" fill="#6b6c6e" />
          </svg>
        </button>
      </div>

      <div className={`${BUTTON} ml-[286px] w-[650px] gap-[10px] pr-[35px]`}>
        <svg className="mt-[2px] h-[26px] w-[26px]" viewBox="0 0 26 26" fill="none" stroke="#6f7072" strokeWidth="2">
          <circle cx="10.6" cy="10.6" r="9.4" />
          <path d="M17.2 17.2L25 25" strokeWidth="2.4" />
        </svg>
        <span className="pt-[2px] text-[26px] leading-none text-[#a9a9aa]">Search</span>
      </div>
    </div>
  );
}

export default function App() {
  return (
    <div className="flex h-[866px] w-[1816px] overflow-hidden bg-white font-['Inter','Noto_Sans_CJK_JP',sans-serif]">
      <Gradients />
      <div className="flex min-w-0 flex-1 flex-col">
        <header className="flex h-[106px] shrink-0 flex-col rounded-tr-[10px] border-b border-[#8c8c8e] bg-[linear-gradient(180deg,#e9e9eb,#e1e1e2_45px,#d0d0d1_103px,#b4b4b5_104px)]">
          <div className="flex h-[46px] items-start pl-3 pt-[6px]">
            <div className="flex w-[782px] gap-4">
              <span className="h-6 w-6 rounded-full border border-[#d9574e] bg-[#ee6b60]" />
              <span className="h-6 w-6 rounded-full border border-[#dba23c] bg-[#f6bf4f]" />
              <span className="h-6 w-6 rounded-full border border-[#4ea73f] bg-[#61c654]" />
            </div>
            <h1 className="-mt-[3px] flex items-start gap-2 text-[26px] leading-[33px] text-[#3c3c3d]">
              <svg className="-mt-px h-8 w-8" viewBox="0 0 32 32">
                <FolderShape />
              </svg>
              <span className="tracking-[-0.15px]">_practical-app</span>
            </h1>
          </div>
          <Toolbar />
        </header>
        <main className="flex min-h-0 flex-1">
          <Sidebar />
          <Column entries={APPS} scrolled />
          <Column entries={MAMP_FILES} />
          <Column entries={HTDOCS} />
          <Column entries={PROJECT} last />
        </main>
      </div>
      <div className="w-[2px] shrink-0 border-l border-[#98989a] bg-[linear-gradient(180deg,#d2d8d8_0px,#d2d8d8_170px,#b5b5b7_171px,#cfcfd0_370px,#77777b_440px,#b0b0b2_520px,#c4c4c4_866px)]" />
    </div>
  );
}
